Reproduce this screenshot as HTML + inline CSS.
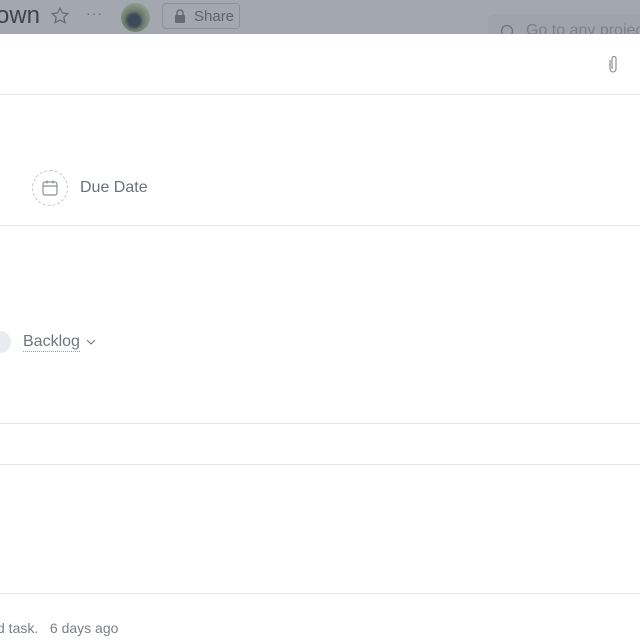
<!DOCTYPE html>
<html><head><style>
body{margin:0;width:640px;height:640px;overflow:hidden;background:#fff;font-family:"Liberation Sans",sans-serif;position:relative}
.top{position:absolute;left:0;top:0;width:640px;height:34px;background:#a3a7af;overflow:hidden}
.ab{position:absolute}
.line{position:absolute;left:0;width:640px;height:1px;background:#e4e6e9}
</style></head><body>
<div class="top">
  <div class="ab" style="left:-4px;top:2px;font-size:24px;color:#3e434c">own</div>
  <svg class="ab" style="left:50px;top:6px" width="20" height="20" viewBox="0 0 20 20"><path d="M10 2l2.4 5 5.4.6-4 3.7 1.1 5.4L10 14l-4.9 2.7 1.1-5.4-4-3.7 5.4-.6z" fill="none" stroke="#656a73" stroke-width="1.2"/></svg>
  <div class="ab" style="left:86px;top:5px;font-size:14px;color:#656a73;letter-spacing:1px">···</div>
  <div class="ab" style="left:121px;top:3px;width:29px;height:29px;border-radius:50%;background:radial-gradient(circle at 45% 60%,#3d4a5a 0 25%,#6c7a6c 40%,#8c9a8c 70%)"></div>
  <div class="ab" style="left:162px;top:3px;width:78px;height:26px;border:1px solid #8e929a;border-radius:4px;box-sizing:border-box"></div>
  <svg class="ab" style="left:174px;top:9px" width="12" height="14" viewBox="0 0 12 14"><rect x="1" y="6" width="10" height="8" rx="1" fill="#656a73"/><path d="M3 6V4a3 3 0 0 1 6 0v2" fill="none" stroke="#656a73" stroke-width="1.5"/></svg>
  <div class="ab" style="left:194px;top:8px;font-size:15px;color:#5e636c">Share</div>
  <div class="ab" style="left:488px;top:14px;width:160px;height:30px;background:#9fa3ab;border-radius:6px"></div>
  <svg class="ab" style="left:500px;top:24px" width="14" height="14"><circle cx="7" cy="7" r="5.5" fill="none" stroke="#6f747c" stroke-width="1.3"/></svg>
  <div class="ab" style="left:526px;top:22px;font-size:16px;color:#7c8089;white-space:nowrap">Go to any project</div>
</div>
<svg class="ab" style="left:606px;top:54px" width="14" height="22" viewBox="0 0 14 22"><path d="M4 6v9a3 3 0 0 0 6 0V4.5a2 2 0 0 0-4 0V15" fill="none" stroke="#8a8f97" stroke-width="1.2"/></svg>
<div class="line" style="top:94px"></div>
<div class="ab" style="left:32px;top:170px;width:34px;height:34px;border:1px dashed #c3c6cb;border-radius:50%"></div>
<svg class="ab" style="left:41px;top:179px" width="18" height="18" viewBox="0 0 18 18"><rect x="2" y="3" width="14" height="13" rx="2" fill="none" stroke="#8a8f97" stroke-width="1.2"/><path d="M2 7h14M6 1.5v3M12 1.5v3" stroke="#8a8f97" stroke-width="1.2"/></svg>
<div class="ab" style="left:80px;top:179px;font-size:16px;color:#6a6f78">Due Date</div>
<div class="line" style="top:225px"></div>
<div class="ab" style="left:-10px;top:331px;width:21px;height:22px;border-radius:50%;background:#e9ebee"></div>
<div class="ab" style="left:23px;top:332px;font-size:16px;color:#6f747d;border-bottom:1px dotted #9a9ea5;line-height:19px">Backlog</div>
<svg class="ab" style="left:86px;top:338px" width="10" height="8"><path d="M1 2l4 4 4-4" fill="none" stroke="#6f747d" stroke-width="1.1"/></svg>
<div class="line" style="top:423px"></div>
<div class="line" style="top:464px"></div>
<div class="line" style="top:593px"></div>
<div class="ab" style="left:-3px;top:620px;font-size:14px;color:#7a7f87;white-space:nowrap">d task. &nbsp;&nbsp;6 days ago</div>
</body></html>
